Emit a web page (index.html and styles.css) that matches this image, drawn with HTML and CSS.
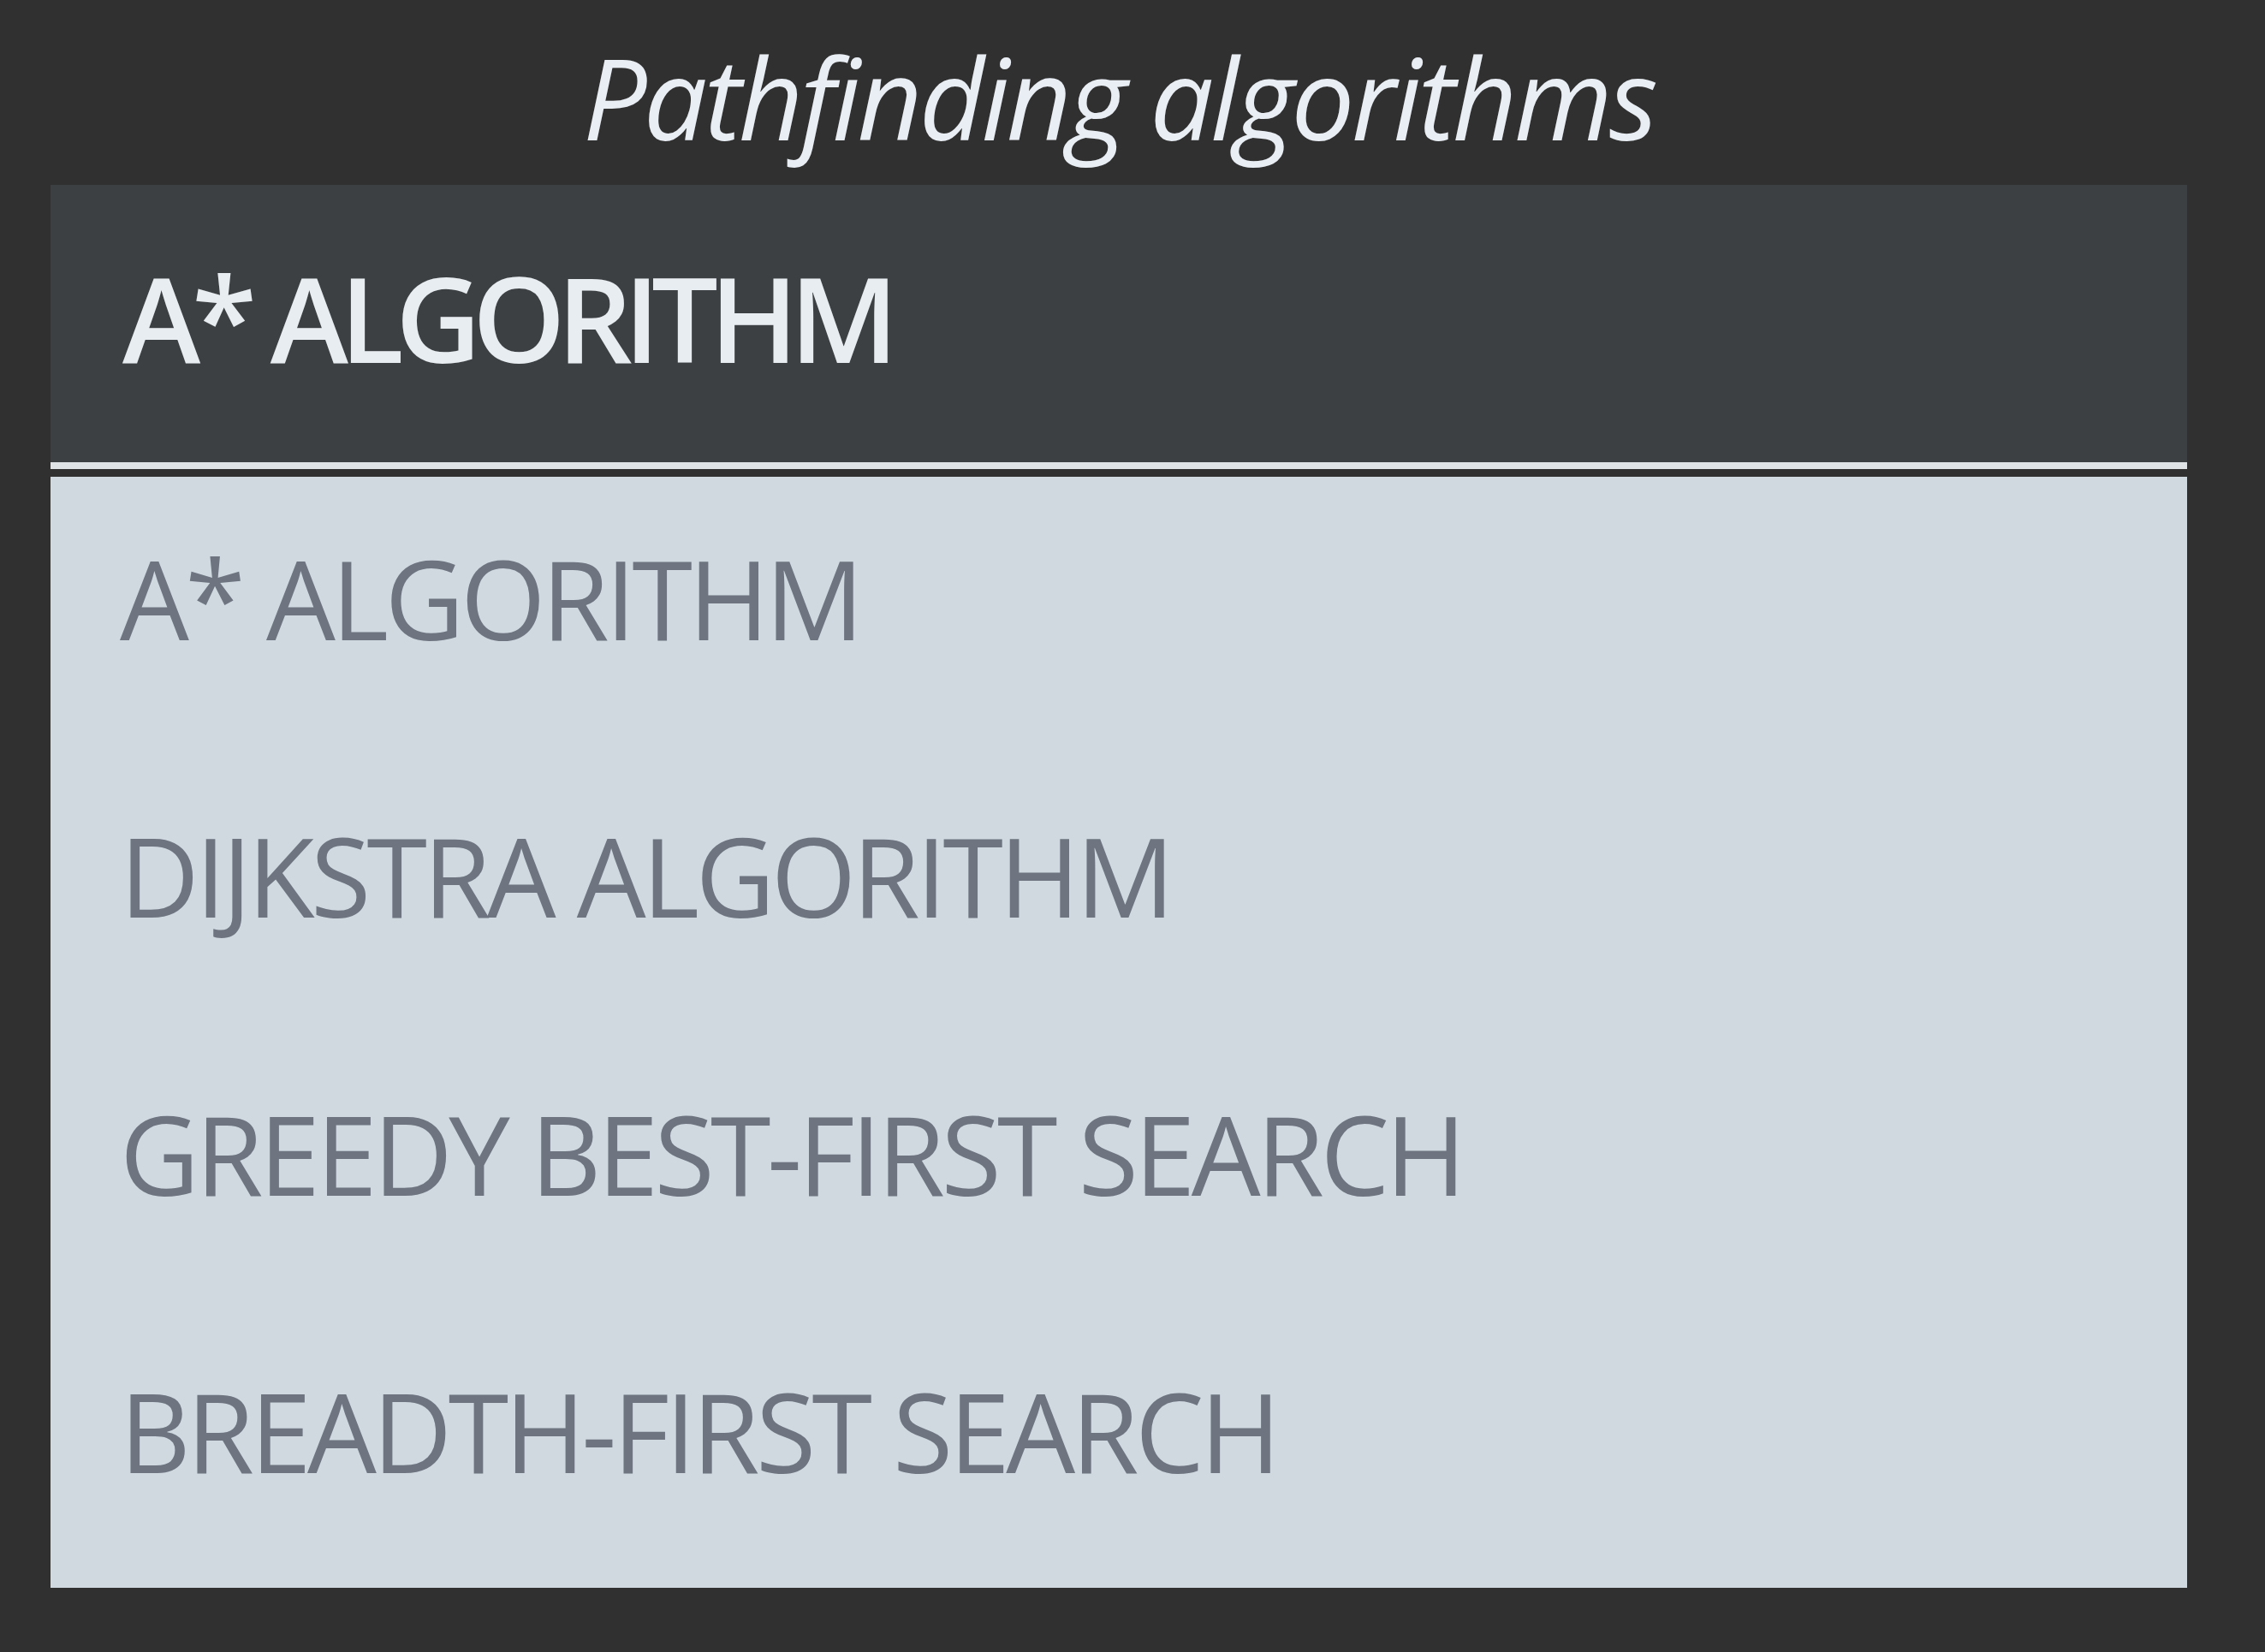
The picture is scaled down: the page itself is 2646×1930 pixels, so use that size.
FILE: index.html
```html
<!DOCTYPE html>
<html lang="en">
<head>
<meta charset="utf-8">
<title>Pathfinding algorithms</title>
<link rel="stylesheet" href="styles.css">
</head>
<body>
<div class="wrap">
  <h1 class="title">Pathfinding algorithms</h1>
  <div class="select">
    <div class="current">A* ALGORITHM</div>
    <div class="options">
      <div class="option">A* ALGORITHM</div>
      <div class="option">DIJKSTRA ALGORITHM</div>
      <div class="option">GREEDY BEST-FIRST SEARCH</div>
      <div class="option">BREADTH-FIRST SEARCH</div>
    </div>
  </div>
</div>
</body>
</html>
```

FILE: styles.css
```css
html, body {
  margin: 0;
  padding: 0;
  background: #303030;
  height: 100%;
}
body {
  font-family: "Open Sans", "Noto Sans", sans-serif;
}
.wrap {
  width: 2496px;
  margin-left: 59px;
}
.title {
  margin: 0;
  height: 216px;
  box-sizing: border-box;
  padding-top: 33px;
  text-align: center;
  font-style: italic;
  font-weight: 400;
  font-size: 132px;
  line-height: 160px;
  letter-spacing: -3.8px;
  color: #e9eef4;
}
.select {
  display: flex;
  flex-direction: column;
}
.current {
  box-sizing: border-box;
  height: 332px;
  background: #3d4043;
  display: flex;
  align-items: center;
  padding-left: 84px;
  padding-bottom: 16px;
  font-weight: 600;
  font-size: 138px;
  letter-spacing: -10px;
  color: #e8edf2;
  border-bottom: 8px solid #e0e3e6;
}
.options {
  margin-top: 9px;
  background: #d0d8e0;
  display: flex;
  flex-direction: column;
}
.option {
  height: 324.5px;
  display: flex;
  align-items: center;
  padding-left: 81px;
  padding-bottom: 42px;
  box-sizing: border-box;
  font-size: 128px;
  letter-spacing: -4.6px;
  color: #6e7580;
}
```
